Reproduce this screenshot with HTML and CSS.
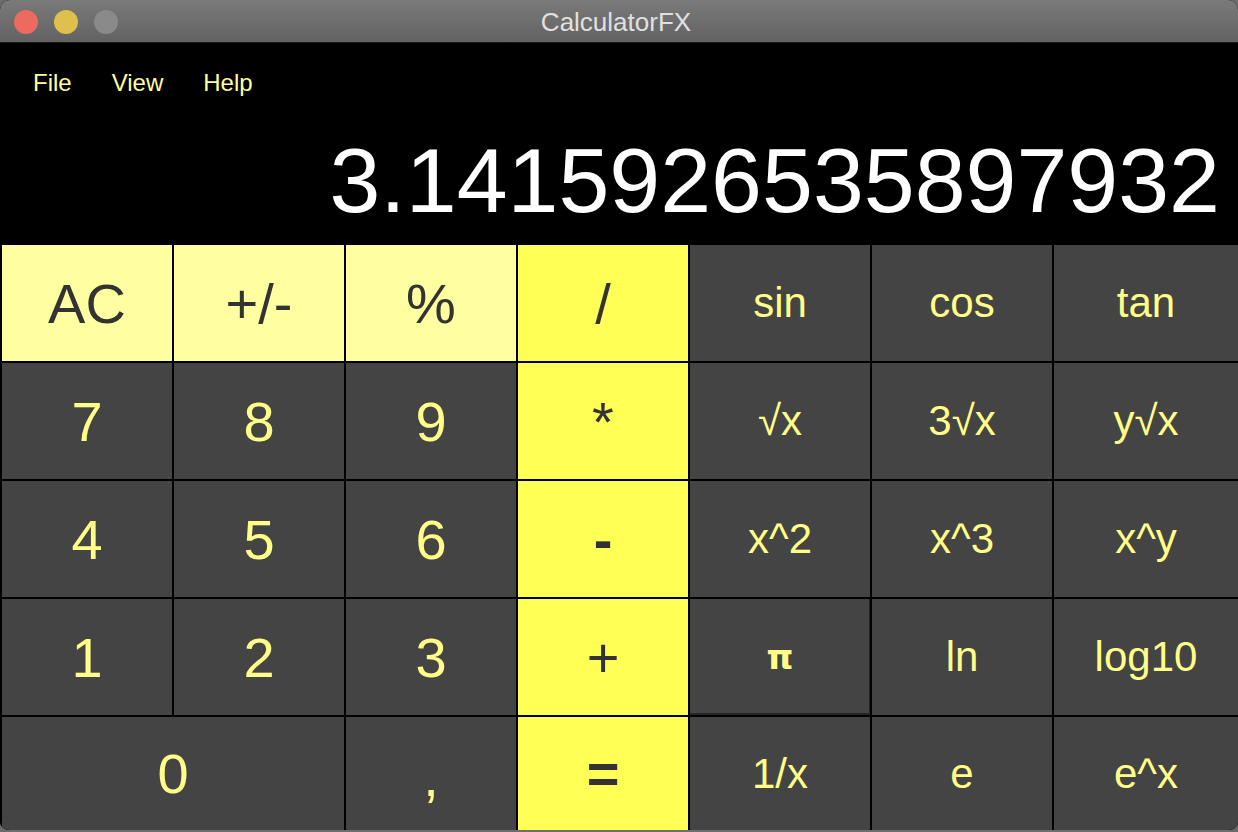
FILE: index.html
```html
<!DOCTYPE html>
<html>
<head>
<meta charset="utf-8">
<title>CalculatorFX</title>
<link rel="stylesheet" href="styles.css">
</head>
<body>
<div class="window">
  <div class="titlebar">
    <div class="lights">
      <span class="light red"></span>
      <span class="light yellow"></span>
      <span class="light gray"></span>
    </div>
    <div class="title">CalculatorFX</div>
  </div>
  <div class="top">
    <nav class="menu">
      <span class="menu-item">File</span>
      <span class="menu-item">View</span>
      <span class="menu-item">Help</span>
    </nav>
    <div class="display">3.1415926535897932</div>
  </div>
  <div class="keys">
    <div class="key light-key">AC</div>
    <div class="key light-key">+/-</div>
    <div class="key light-key">%</div>
    <div class="key op">/</div>
    <div class="key fn">sin</div>
    <div class="key fn">cos</div>
    <div class="key fn">tan</div>

    <div class="key num">7</div>
    <div class="key num">8</div>
    <div class="key num">9</div>
    <div class="key op">*</div>
    <div class="key fn">√x</div>
    <div class="key fn">3√x</div>
    <div class="key fn">y√x</div>

    <div class="key num">4</div>
    <div class="key num">5</div>
    <div class="key num">6</div>
    <div class="key op heavy">-</div>
    <div class="key fn">x^2</div>
    <div class="key fn">x^3</div>
    <div class="key fn">x^y</div>

    <div class="key num">1</div>
    <div class="key num">2</div>
    <div class="key num">3</div>
    <div class="key op">+</div>
    <div class="key fn focused"><span class="pi">π</span></div>
    <div class="key fn">ln</div>
    <div class="key fn">log10</div>

    <div class="key num zero">0</div>
    <div class="key num comma">,</div>
    <div class="key op heavy">=</div>
    <div class="key fn">1/x</div>
    <div class="key fn">e</div>
    <div class="key fn">e^x</div>
  </div>
</div>
</body>
</html>
```

FILE: styles.css
```css
html, body {
  margin: 0;
  padding: 0;
}
body {
  width: 1238px;
  height: 832px;
  background: #6a6a6a;
  overflow: hidden;
  font-family: "Liberation Sans", Arial, Helvetica, sans-serif;
}
.window {
  width: 1238px;
  height: 832px;
  border-radius: 10px;
  overflow: hidden;
  background: #000;
  display: flex;
  flex-direction: column;
  box-sizing: border-box;
  border-bottom: 2px solid #6e6e6e;
}
.titlebar {
  height: 43px;
  flex: 0 0 43px;
  box-sizing: border-box;
  background: linear-gradient(#7a7a7a, #626262);
  border-bottom: 1px solid #1a1a1a;
  position: relative;
  display: flex;
  align-items: center;
  justify-content: center;
}
.lights {
  position: absolute;
  left: 14px;
  top: 10px;
  display: flex;
  gap: 16px;
}
.light {
  width: 24px;
  height: 24px;
  border-radius: 50%;
  display: block;
}
.light.red { background: #ec6a5e; }
.light.yellow { background: #e0c04c; }
.light.gray { background: #8a8a8a; }
.title {
  color: #e0e0e0;
  font-size: 26px;
  line-height: 30px;
  margin-top: 2px;
  margin-right: 6px;
}
.top {
  height: 202px;
  flex: 0 0 202px;
  display: flex;
  flex-direction: column;
  background: #000;
}
.menu {
  display: flex;
  gap: 40px;
  padding: 26px 0 0 33px;
  height: 28px;
}
.menu-item {
  color: #ffff99;
  font-size: 24px;
  line-height: 28px;
}
.display {
  color: #ffffff;
  font-size: 91.5px;
  line-height: 92px;
  text-align: right;
  padding-right: 18px;
  margin-top: 37px;
  white-space: nowrap;
}
.keys {
  flex: 1;
  display: grid;
  grid-template-columns: 170px 170px 170px 170px 180px 180px 1fr;
  grid-template-rows: 116px 116px 116px 116px 1fr;
  gap: 2px;
  padding-left: 2px;
  background: #000;
}
.key {
  display: flex;
  align-items: center;
  justify-content: center;
  font-size: 56px;
  color: #ffff88;
  background: #444444;
}
.light-key {
  background: #ffffa1;
  color: #333333;
}
.op {
  background: #ffff55;
  color: #333333;
}
.heavy {
  font-weight: bold;
}
.fn {
  font-size: 42px;
}
.zero {
  grid-column: span 2;
}
.comma {
  padding-top: 6px;
}
.focused {
  box-shadow: inset -1px -2px 0 #262626;
}
.pi {
  font-size: 34px;
  font-family: "DejaVu Sans", sans-serif;
  font-weight: bold;
}
```
